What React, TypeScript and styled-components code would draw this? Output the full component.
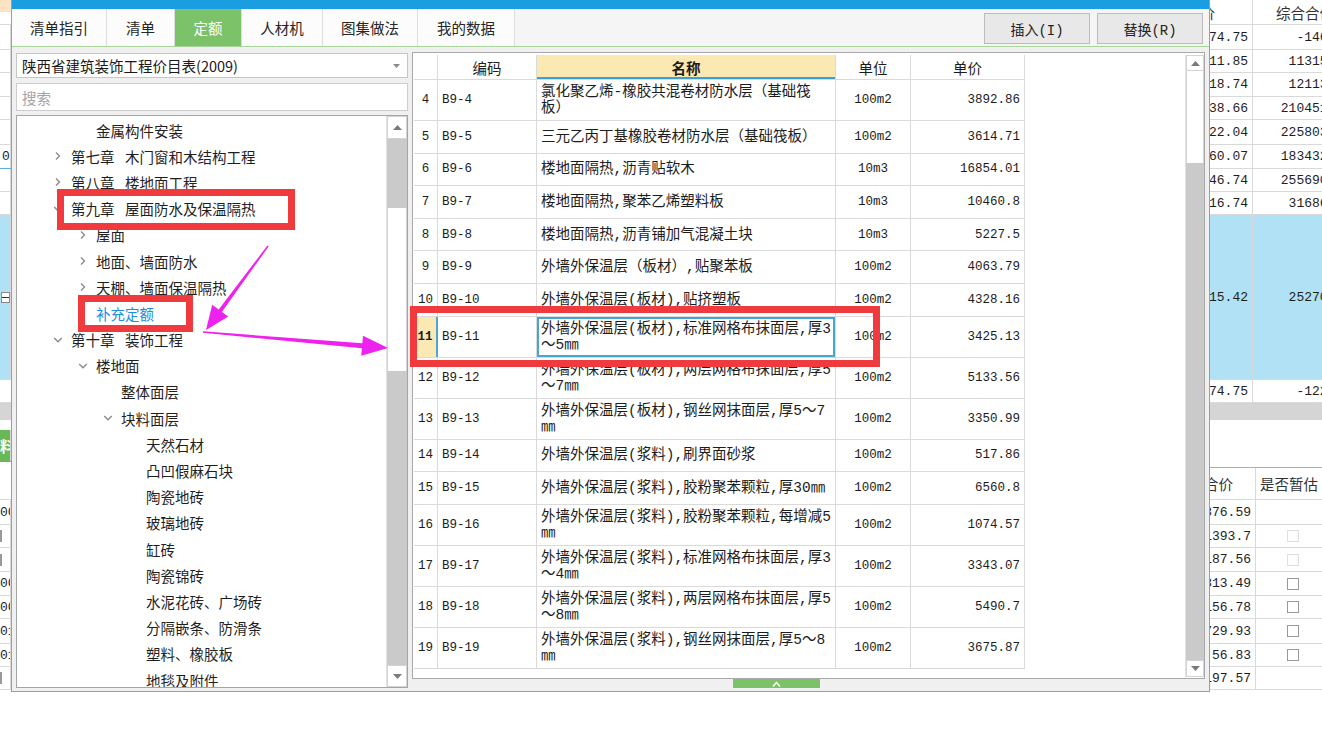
import React from "react";
import styled, { createGlobalStyle } from "styled-components";

const SANS = `"Noto Sans CJK SC", "Noto Sans", sans-serif`;
const MONO = `"Liberation Mono", "Noto Sans CJK SC", monospace`;

const GlobalStyle = createGlobalStyle`
  html, body {
    margin: 0;
    padding: 0;
    background: #ffffff;
  }
  body {
    font-family: ${SANS};
    color: #222;
  }
  *, *::before, *::after {
    box-sizing: border-box;
  }
`;

const Screen = styled.div`
  position: relative;
  width: 1322px;
  height: 733px;
  overflow: hidden;
  background: #fff;
`;

/* ---------- spreadsheet behind the dialog ---------- */

const Backdrop = styled.div`
  display: flex;
  width: 1358px;
  height: 733px;
`;

const Strip = styled.div`
  width: 11px;
  flex: none;
  overflow: hidden;
  display: flex;
  flex-direction: column;
`;

const Filler = styled.div`
  flex: 1;
`;

const Sheet = styled.div`
  width: 209px;
  flex: none;
  display: flex;
  flex-direction: column;
`;

const SheetRow = styled.div<{ $h: number; $bg?: string; $cols?: string; $line?: string }>`
  height: ${(p) => p.$h}px;
  flex: none;
  display: grid;
  grid-template-columns: ${(p) => p.$cols || "1fr"};
  background: ${(p) => p.$bg || "#fff"};
  border-bottom: 1px solid ${(p) => p.$line || "#d9d9d9"};
  font-family: ${MONO};
  font-size: 13px;
  color: #1e1e1e;
`;

const SheetCell = styled.div<{ $align?: "left" | "center" | "right"; $pad?: string; $sans?: boolean }>`
  display: flex;
  align-items: center;
  justify-content: ${(p) =>
    p.$align === "right" ? "flex-end" : p.$align === "center" ? "center" : "flex-start"};
  padding: ${(p) => p.$pad || "0 4px"};
  border-right: 1px solid #d9d9d9;
  white-space: nowrap;
  overflow: hidden;
  font-family: ${(p) => (p.$sans ? SANS : MONO)};
  font-size: ${(p) => (p.$sans ? "14.5px" : "13px")};
  color: ${(p) => (p.$sans ? "#333" : "#1e1e1e")};
`;

const Check = styled.span<{ $faded?: boolean }>`
  display: inline-block;
  width: 12px;
  height: 12px;
  background: #fff;
  border: 1px solid ${(p) => (p.$faded ? "#dedede" : "#9a9a9a")};
`;

const MinusBox = styled.span`
  display: inline-flex;
  align-items: center;
  justify-content: center;
  width: 11px;
  height: 11px;
  background: #fff;
  border: 1px solid #8a8a8a;
  &::after {
    content: "";
    width: 7px;
    height: 1px;
    background: #333;
  }
`;

/* ---------- the dialog ---------- */

const Dialog = styled.section`
  position: absolute;
  left: 11px;
  top: 0;
  width: 1199px;
  height: 692px;
  display: flex;
  flex-direction: column;
  background: #f0f0f0;
  border: 1px solid #9d9d9d;
  border-top: none;
`;

const TitleStrip = styled.div`
  height: 9px;
  flex: none;
  background: #1b9de2;
`;

const TabBar = styled.div`
  height: 38px;
  flex: none;
  display: flex;
  align-items: flex-start;
  background: #f5f5f5;
  border-bottom: 1px solid #a8d69a;
  padding-right: 6px;
`;

const Tab = styled.div<{ $w: number; $active?: boolean }>`
  width: ${(p) => p.$w}px;
  height: 37px;
  display: flex;
  align-items: center;
  justify-content: center;
  font-size: 14.5px;
  color: ${(p) => (p.$active ? "#fff" : "#262626")};
  background: ${(p) => (p.$active ? "#7cc269" : "#fcfcfc")};
  border-right: 1px solid #dedede;
`;

const Tools = styled.div`
  margin-left: auto;
  display: flex;
  gap: 7px;
  padding-top: 4px;
`;

const ToolButton = styled.div`
  width: 106px;
  height: 31px;
  display: flex;
  align-items: center;
  justify-content: center;
  background: #e8e8e8;
  border: 1px solid #bcbcbc;
  font-family: ${MONO};
  font-size: 14px;
  color: #222;
`;

const Body = styled.div`
  flex: 1;
  display: flex;
  gap: 4px;
  padding: 5px 4px 0 4px;
`;

const LeftPane = styled.div`
  width: 392px;
  flex: none;
  margin-top: 1px;
  display: flex;
  flex-direction: column;
`;

const Select = styled.div`
  height: 25px;
  margin-bottom: 5px;
  display: flex;
  align-items: center;
  justify-content: space-between;
  padding: 0 7px 0 5px;
  background: #fff;
  border: 1px solid #c6c6c6;
  font-size: 14.5px;
  color: #1a1a1a;
`;

const Search = styled.div`
  height: 28px;
  margin-bottom: 4px;
  display: flex;
  align-items: center;
  padding-left: 5px;
  background: #fff;
  border: 1px solid #cdcdcd;
  font-size: 14.5px;
  color: #a3a3a3;
`;

const TreeBox = styled.div`
  height: 573px;
  display: flex;
  background: #fff;
  border: 1px solid #a5a5a5;
`;

const TreeList = styled.div`
  flex: 1;
  overflow: hidden;
  padding-top: 1px;
`;

const TreeRow = styled.div<{ $level: number; $link?: boolean }>`
  height: 26.2px;
  display: flex;
  align-items: center;
  padding-left: ${(p) => 36 + p.$level * 25}px;
  font-size: 14.5px;
  color: ${(p) => (p.$link ? "#1a8fe0" : "#1f1f1f")};
  white-space: pre;
`;

const Twisty = styled.span`
  width: 18px;
  flex: none;
  display: flex;
  align-items: center;
`;

const ScrollBar = styled.div<{ $w: number }>`
  width: ${(p) => p.$w}px;
  flex: none;
  display: flex;
  flex-direction: column;
  background: #fff;
  border-left: 1px solid #e2e2e2;
`;

const ScrollBtn = styled.div<{ $h: number }>`
  height: ${(p) => p.$h}px;
  flex: none;
  display: flex;
  align-items: center;
  justify-content: center;
  background: #fff;
  border: 1px solid #d3d3d3;
`;

const ScrollPiece = styled.div<{ $h?: number; $thumb?: boolean }>`
  ${(p) => (p.$h ? `height: ${p.$h}px; flex: none;` : "flex: 1;")}
  background: ${(p) => (p.$thumb ? "#ffffff" : "#cacaca")};
  border-left: 1px solid ${(p) => (p.$thumb ? "#d3d3d3" : "#cacaca")};
  border-right: 1px solid ${(p) => (p.$thumb ? "#d3d3d3" : "#cacaca")};
`;

const RightPane = styled.div`
  width: 793px;
  flex: none;
  display: flex;
  flex-direction: column;
`;

const TablePanel = styled.div`
  height: 627px;
  display: flex;
  background: #fff;
  border: 1px solid #a9a9a9;
  padding: 2px 0 1px 1px;
`;

const Grid = styled.div`
  flex: 1;
  overflow: hidden;
`;

const COLS = "24px 99px 299px 75px 114px";

const GridRow = styled.div<{ $h: number }>`
  display: grid;
  grid-template-columns: ${COLS};
  width: 611px;
  height: ${(p) => p.$h}px;
  border-bottom: 1px solid #dadada;
`;

const Cell = styled.div<{
  $align?: "left" | "center" | "right";
  $head?: boolean;
  $mark?: boolean;
  $focus?: boolean;
  $bold?: boolean;
  $edge?: boolean;
}>`
  display: flex;
  align-items: center;
  justify-content: ${(p) =>
    p.$align === "right" ? "flex-end" : p.$align === "center" ? "center" : "flex-start"};
  padding: 0 4px;
  border-right: ${(p) => (p.$edge ? "2px solid #4ba7d6" : "1px solid #dadada")};
  overflow: hidden;
  white-space: nowrap;
  font-family: ${(p) => (p.$head ? SANS : MONO)};
  font-size: ${(p) => (p.$head ? "14.5px" : "12.5px")};
  font-weight: ${(p) => (p.$bold ? 700 : 400)};
  color: #1c1c1c;
  background: ${(p) => (p.$mark ? "#fce8b2" : "transparent")};
  box-shadow: ${(p) =>
    p.$focus ? "inset 0 0 0 2px #45a6d6" : p.$head && p.$mark ? "inset 0 -2px 0 #3d9fd4" : "none"};
`;

const NameCell = styled.div<{ $focus?: boolean }>`
  display: flex;
  flex-direction: column;
  justify-content: center;
  padding: 0 3px 0 4px;
  border-right: 1px solid #dadada;
  overflow: hidden;
  white-space: nowrap;
  font-family: ${MONO};
  font-size: 14.5px;
  line-height: 16px;
  color: #1c1c1c;
  box-shadow: ${(p) => (p.$focus ? "inset 0 0 0 2px #45a6d6" : "none")};
`;

const PanelFoot = styled.div`
  height: 9px;
  padding-left: 321px;
`;

const Handle = styled.div`
  width: 87px;
  height: 9px;
  display: flex;
  align-items: center;
  justify-content: center;
  background: #7cc269;
`;

const Overlay = styled.svg`
  position: absolute;
  left: 0;
  top: 0;
  pointer-events: none;
`;

/* ---------- small drawings ---------- */

const Chevron = ({ dir }: { dir: "right" | "down" }) => (
  <svg width="10" height="10" viewBox="0 0 10 10">
    <path
      d={dir === "right" ? "M3 1.5 L6.5 5 L3 8.5" : "M1.2 3 L5 6.8 L8.8 3"}
      fill="none"
      stroke="#8c8c8c"
      strokeWidth="1.4"
    />
  </svg>
);

const Tri = ({ up }: { up?: boolean }) => (
  <svg width="9" height="5" viewBox="0 0 9 5">
    <path d={up ? "M0 5 L4.5 0 L9 5 Z" : "M0 0 L4.5 5 L9 0 Z"} fill="#7a7a7a" />
  </svg>
);

/* ---------- data ---------- */

type TreeItem = { level: number; text: string; arrow?: "right" | "down"; link?: boolean };

const tree: TreeItem[] = [
  { level: 1, text: "金属构件安装" },
  { level: 0, text: "第七章\u2002 木门窗和木结构工程", arrow: "right" },
  { level: 0, text: "第八章\u2002 楼地面工程", arrow: "right" },
  { level: 0, text: "第九章\u2002 屋面防水及保温隔热", arrow: "down" },
  { level: 1, text: "屋面", arrow: "right" },
  { level: 1, text: "地面、墙面防水", arrow: "right" },
  { level: 1, text: "天棚、墙面保温隔热", arrow: "right" },
  { level: 1, text: "补充定额", link: true },
  { level: 0, text: "第十章\u2002 装饰工程", arrow: "down" },
  { level: 1, text: "楼地面", arrow: "down" },
  { level: 2, text: "整体面层" },
  { level: 2, text: "块料面层", arrow: "down" },
  { level: 3, text: "天然石材" },
  { level: 3, text: "凸凹假麻石块" },
  { level: 3, text: "陶瓷地砖" },
  { level: 3, text: "玻璃地砖" },
  { level: 3, text: "缸砖" },
  { level: 3, text: "陶瓷锦砖" },
  { level: 3, text: "水泥花砖、广场砖" },
  { level: 3, text: "分隔嵌条、防滑条" },
  { level: 3, text: "塑料、橡胶板" },
  { level: 3, text: "地毯及附件" },
];

type Quota = { n: number; code: string; name: string[]; unit: string; price: string; selected?: boolean };

const quotas: Quota[] = [
  { n: 4, code: "B9-4", name: ["氯化聚乙烯-橡胶共混卷材防水层（基础筏", "板）"], unit: "100m2", price: "3892.86" },
  { n: 5, code: "B9-5", name: ["三元乙丙丁基橡胶卷材防水层（基础筏板）"], unit: "100m2", price: "3614.71" },
  { n: 6, code: "B9-6", name: ["楼地面隔热,沥青贴软木"], unit: "10m3", price: "16854.01" },
  { n: 7, code: "B9-7", name: ["楼地面隔热,聚苯乙烯塑料板"], unit: "10m3", price: "10460.8" },
  { n: 8, code: "B9-8", name: ["楼地面隔热,沥青铺加气混凝土块"], unit: "10m3", price: "5227.5" },
  { n: 9, code: "B9-9", name: ["外墙外保温层（板材）,贴聚苯板"], unit: "100m2", price: "4063.79" },
  { n: 10, code: "B9-10", name: ["外墙外保温层(板材),贴挤塑板"], unit: "100m2", price: "4328.16" },
  { n: 11, code: "B9-11", name: ["外墙外保温层(板材),标准网格布抹面层,厚3", "～5㎜"], unit: "100m2", price: "3425.13", selected: true },
  { n: 12, code: "B9-12", name: ["外墙外保温层(板材),两层网格布抹面层,厚5", "～7㎜"], unit: "100m2", price: "5133.56" },
  { n: 13, code: "B9-13", name: ["外墙外保温层(板材),钢丝网抹面层,厚5～7", "㎜"], unit: "100m2", price: "3350.99" },
  { n: 14, code: "B9-14", name: ["外墙外保温层(浆料),刷界面砂浆"], unit: "100m2", price: "517.86" },
  { n: 15, code: "B9-15", name: ["外墙外保温层(浆料),胶粉聚苯颗粒,厚30㎜"], unit: "100m2", price: "6560.8" },
  { n: 16, code: "B9-16", name: ["外墙外保温层(浆料),胶粉聚苯颗粒,每增减5", "㎜"], unit: "100m2", price: "1074.57" },
  { n: 17, code: "B9-17", name: ["外墙外保温层(浆料),标准网格布抹面层,厚3", "～4㎜"], unit: "100m2", price: "3343.07" },
  { n: 18, code: "B9-18", name: ["外墙外保温层(浆料),两层网格布抹面层,厚5", "～8㎜"], unit: "100m2", price: "5490.7" },
  { n: 19, code: "B9-19", name: ["外墙外保温层(浆料),钢丝网抹面层,厚5～8", "㎜"], unit: "100m2", price: "3675.87" },
];

const tabs = [
  { label: "清单指引", w: 95 },
  { label: "清单", w: 68 },
  { label: "定额", w: 67, active: true },
  { label: "人材机", w: 81 },
  { label: "图集做法", w: 95 },
  { label: "我的数据", w: 97 },
];

const upperHeights = [25, 23, 24, 23, 25, 24, 23, 23];
const upperVals = [
  ["574.75", "-146.31"],
  ["5311.85", "11315.72"],
  ["1118.74", "12113.56"],
  ["2538.66", "210451.36"],
  ["3022.04", "225803.11"],
  ["1260.07", "183432.90"],
  ["1646.74", "255690.47"],
  ["616.74", "31686.25"],
];

const lowerHeights = [25, 23, 24, 24, 23, 25, 23, 23];
const lowerVals = ["2876.59", "11393.7", "2187.56", "4813.49", "1156.78", "3729.93", "56.83", "1197.57"];
const lowerCheck: ("none" | "faded" | "on")[] = ["none", "faded", "faded", "on", "on", "on", "on", "none"];
const stripLower = ["00", "box", "box", "00", "00", "01", "01", "box"];

const UP_COLS = "104px 105px";
const LOW_COLS = "107px 102px";

export default function App() {
  return (
    <>
      <GlobalStyle />
      <Screen>
        <Backdrop>
          <Strip>
            <SheetRow $h={25} $bg="linear-gradient(#fbe3c3 0 12px, #fff 12px)" />
            {upperHeights.map((h, i) => (
              <SheetRow key={i} $h={h} $line={i === 5 ? "#5aaee0" : undefined}>
                <SheetCell $pad="0 0 0 2px">{i === 5 ? "0:" : ""}</SheetCell>
              </SheetRow>
            ))}
            <SheetRow $h={165} $bg="#b0e1f4">
              <SheetCell $pad="0 0 0 1px">
                <MinusBox />
              </SheetCell>
            </SheetRow>
            <SheetRow $h={23} />
            <SheetRow $h={17} $bg="#d5d5d5" $line="#d5d5d5" />
            <SheetRow $h={10} $line="#fff" />
            <SheetRow $h={32} $bg="#67b957" $line="#67b957">
              <SheetCell $sans $pad="0" style={{ color: "#fff", fontWeight: 700 }}>
                料
              </SheetCell>
            </SheetRow>
            <SheetRow $h={6} $line="#fff" />
            <SheetRow $h={32} />
            {lowerHeights.map((h, i) => (
              <SheetRow key={i} $h={h}>
                <SheetCell $pad="0">
                  {stripLower[i] === "box" ? (
                    <>
                      <Check />
                      &nbsp;0
                    </>
                  ) : (
                    stripLower[i]
                  )}
                </SheetCell>
              </SheetRow>
            ))}
          </Strip>
          <Filler />
          <Sheet>
            <SheetRow $h={25} $cols={UP_COLS}>
              <SheetCell $sans $align="center">单价</SheetCell>
              <SheetCell $sans $align="center">综合合价</SheetCell>
            </SheetRow>
            {upperVals.map(([a, b], i) => (
              <SheetRow key={i} $h={upperHeights[i]} $cols={UP_COLS}>
                <SheetCell $align="right">{a}</SheetCell>
                <SheetCell $align="right" $pad="0 6px 0 0">{b}</SheetCell>
              </SheetRow>
            ))}
            <SheetRow $h={165} $cols={UP_COLS} $bg="#b0e1f4">
              <SheetCell $align="right">2215.42</SheetCell>
              <SheetCell $align="right" $pad="0 6px 0 0">25270.84</SheetCell>
            </SheetRow>
            <SheetRow $h={23} $cols={UP_COLS}>
              <SheetCell $align="right">574.75</SheetCell>
              <SheetCell $align="right" $pad="0 6px 0 0">-122.75</SheetCell>
            </SheetRow>
            <SheetRow $h={17} $bg="#d5d5d5" $line="#d5d5d5" />
            <SheetRow $h={48} $line="#8cc97a" />
            <SheetRow $h={32} $cols={LOW_COLS}>
              <SheetCell $sans $align="right" $pad="0 22px 0 0">合价</SheetCell>
              <SheetCell $sans $pad="0 0 0 4px">是否暂估</SheetCell>
            </SheetRow>
            {lowerVals.map((v, i) => (
              <SheetRow key={i} $h={lowerHeights[i]} $cols={LOW_COLS}>
                <SheetCell $align="right">{v}</SheetCell>
                <SheetCell $pad="0 0 0 31px">
                  {lowerCheck[i] !== "none" && <Check $faded={lowerCheck[i] === "faded"} />}
                </SheetCell>
              </SheetRow>
            ))}
          </Sheet>
        </Backdrop>

        <Dialog>
          <TitleStrip />
          <TabBar>
            {tabs.map((t) => (
              <Tab key={t.label} $w={t.w} $active={t.active}>
                {t.label}
              </Tab>
            ))}
            <Tools>
              <ToolButton>插入(I)</ToolButton>
              <ToolButton>替换(R)</ToolButton>
            </Tools>
          </TabBar>

          <Body>
            <LeftPane>
              <Select>
                <span>陕西省建筑装饰工程价目表(2009)</span>
                <svg width="7" height="4" viewBox="0 0 7 4">
                  <path d="M0 0 L3.5 4 L7 0 Z" fill="#8a8a8a" />
                </svg>
              </Select>
              <Search>搜索</Search>
              <TreeBox>
                <TreeList>
                  {tree.map((item, i) => (
                    <TreeRow key={i} $level={item.level} $link={item.link}>
                      <Twisty>{item.arrow && <Chevron dir={item.arrow} />}</Twisty>
                      {item.text}
                    </TreeRow>
                  ))}
                </TreeList>
                <ScrollBar $w={21}>
                  <ScrollBtn $h={23}>
                    <Tri up />
                  </ScrollBtn>
                  <ScrollPiece $h={69} />
                  <ScrollPiece $h={163} $thumb />
                  <ScrollPiece />
                  <ScrollBtn $h={22}>
                    <Tri />
                  </ScrollBtn>
                </ScrollBar>
              </TreeBox>
            </LeftPane>

            <RightPane>
              <TablePanel>
                <Grid>
                  <GridRow $h={25}>
                    <Cell $head />
                    <Cell $head $align="center">编码</Cell>
                    <Cell $head $align="center" $mark $bold>名称</Cell>
                    <Cell $head $align="center">单位</Cell>
                    <Cell $head $align="center">单价</Cell>
                  </GridRow>
                  {quotas.map((q) => (
                    <GridRow key={q.n} $h={q.name.length > 1 ? 41 : 32.6}>
                      <Cell
                        $align="center"
                        $mark={q.selected}
                        $bold={q.selected}
                        $edge={q.selected}
                      >
                        {q.n}
                      </Cell>
                      <Cell>{q.code}</Cell>
                      <NameCell $focus={q.selected}>
                        {q.name.map((line, j) => (
                          <div key={j}>{line}</div>
                        ))}
                      </NameCell>
                      <Cell $align="center">{q.unit}</Cell>
                      <Cell $align="right">{q.price}</Cell>
                    </GridRow>
                  ))}
                </Grid>
                <ScrollBar $w={19}>
                  <ScrollBtn $h={16}>
                    <Tri up />
                  </ScrollBtn>
                  <ScrollPiece $h={92} $thumb />
                  <ScrollPiece />
                  <ScrollBtn $h={17}>
                    <Tri />
                  </ScrollBtn>
                </ScrollBar>
              </TablePanel>
              <PanelFoot>
                <Handle>
                  <svg width="9" height="6" viewBox="0 0 9 6">
                    <path d="M1 5.5 L4.5 1.5 L8 5.5" fill="none" stroke="#fff" strokeWidth="1.5" />
                  </svg>
                </Handle>
              </PanelFoot>
            </RightPane>
          </Body>
        </Dialog>

        <Overlay width="1322" height="733" viewBox="0 0 1322 733">
          <g fill="none" stroke="#ef3a3e" strokeWidth="7">
            <rect x="60.5" y="192.5" width="231" height="34" />
            <rect x="81.5" y="298.5" width="108" height="30" />
            <rect x="413.5" y="309.5" width="463" height="54" />
          </g>
          <g fill="#ee22ee">
            <polygon points="268.6,246.4 221.9,311.9 228.3,316.6 206,330 212.2,304.8 218.7,309.5 267.4,245.6" />
            <polygon points="202.9,332.7 361.9,348.3 361.2,355.7 388,348 363,335.8 362.3,343.3 203.1,331.3" />
          </g>
        </Overlay>
      </Screen>
    </>
  );
}
